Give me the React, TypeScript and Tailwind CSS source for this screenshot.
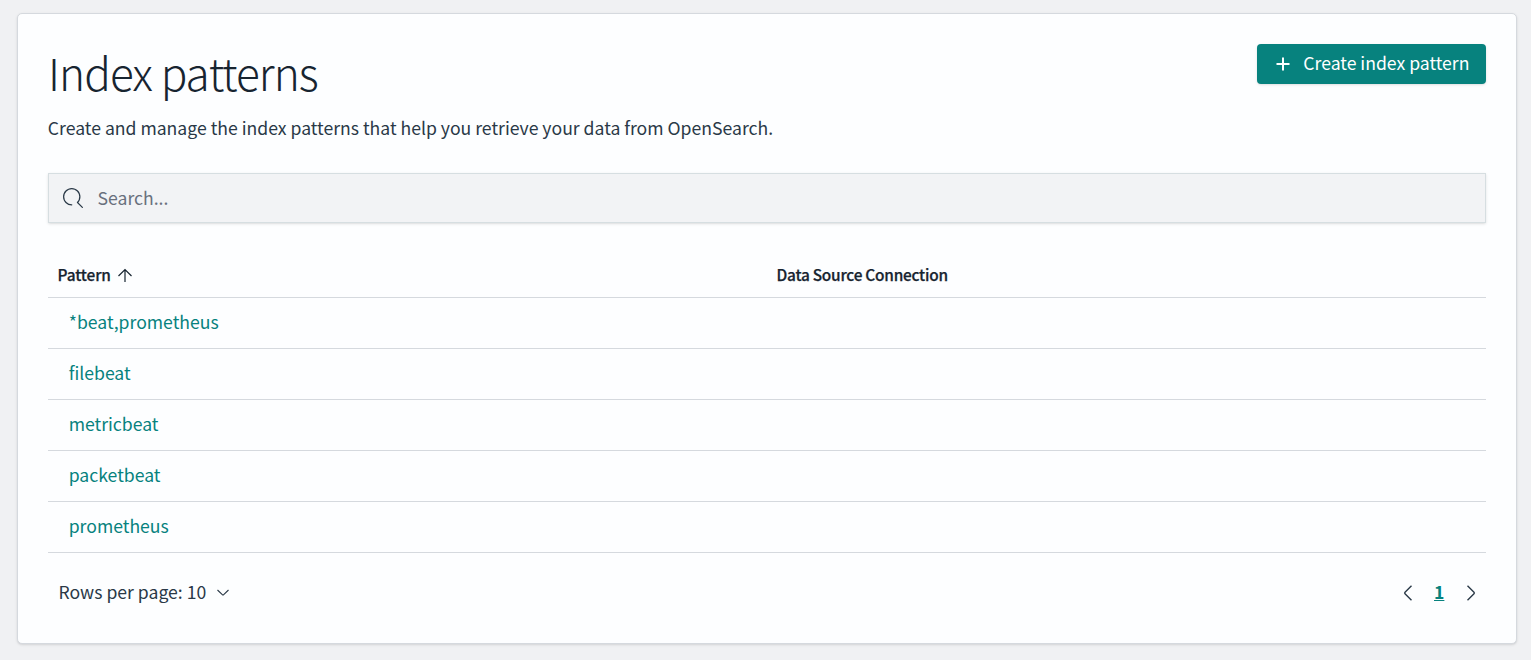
import React from "react";

const rows = ["*beat,prometheus", "filebeat", "metricbeat", "packetbeat", "prometheus"];

export default function App() {
  return (
    <div className="h-[660px] bg-[#f0f1f3] pt-[13px] pr-[14px] pl-[17px] font-['Noto_Sans_CJK_SC','Noto_Sans',sans-serif] text-[17.63px] text-[#2a3947]">
      <main className="h-[631px] rounded-[5px] border border-[#d5d9de] bg-[#fdfeff] px-[30px] pt-[30px] shadow-sm">
        <header className="flex h-[129px] items-start justify-between">
          <div>
            <h1 className="h-[63px] text-[44.1px] leading-[56px] font-light tracking-[-0.95px] whitespace-nowrap text-[#172430]">Index pa<span className="tracking-[-2.3px]">t</span>terns</h1>
            <p className="-ml-[0.2px] leading-[42px] whitespace-nowrap">Create and manage the index patterns that help you retrieve your data from OpenSearch.</p>
          </div>
          <button className="flex h-10 w-[229px] items-center rounded-[4px] bg-[#07827e] pl-[19px] text-white shadow-sm">
            <svg width="14" height="14" viewBox="0 0 14 14" stroke="currentColor" strokeWidth="2" fill="none"><path d="M7 .5v13M.5 7h13" /></svg>
            <span className="ml-[13.3px] pb-px whitespace-nowrap">Create index pattern</span>
          </button>
        </header>
        <div className="flex h-[50px] items-center border border-[#d6dee1] bg-[#f2f3f5] pl-[14px] shadow-sm">
          <svg width="20" height="20" viewBox="0 0 16 16" fill="#2a3947"><path d="M11.271 11.978l3.872 3.873a.502.502 0 00.708 0 .502.502 0 000-.708l-3.565-3.564c2.38-2.747 2.267-6.923-.342-9.532-2.73-2.73-7.17-2.73-9.898 0-2.728 2.729-2.728 7.17 0 9.9a6.955 6.955 0 004.949 2.05.5.5 0 000-1 5.96 5.96 0 01-4.242-1.757 6.01 6.01 0 010-8.486 6.004 6.004 0 018.484 0 6.01 6.01 0 010 8.486.5.5 0 00.034.738z" /></svg>
          <span className="ml-[14.5px] text-[#69707d]">Search...</span>
        </div>
        <div className="mt-[30px] flex h-[45px] items-center border-b border-[#d5d9de] text-[15.4px] font-medium tracking-[-0.23px] text-[#172430] [-webkit-text-stroke:0.25px_#172430]">
          <div className="flex w-[719px] items-center gap-[7.4px] pl-[9.5px]">
            <span className="tracking-[-0.1px]">Pattern</span>
            <svg width="14" height="14" viewBox="0 0 14 14" stroke="currentColor" strokeWidth="1.2" fill="none"><path d="M7 14V1.5M.5 8L7 1.5l6.5 6.5" /></svg>
          </div>
          <div className="pl-[9.5px]">Data Source Connection</div>
        </div>
        {rows.map((r) => (
          <div key={r} className="flex h-[51px] items-center border-b border-[#d5d9de] pb-px pl-[20.7px] text-[#07827e]">{r}</div>
        ))}
        <footer className="mt-5 flex h-10 items-center justify-between pr-[10px] pl-[10.5px]">
          <div className="flex items-center gap-[11px]">
            <span className="pb-px">Rows per page: 10</span>
            <svg className="mb-px" width="12" height="7" viewBox="0 0 12 7" stroke="currentColor" strokeWidth="1.1" fill="none"><path d="M.5 1l4.8 4.7a1 1 0 001.4 0L11.5 1" /></svg>
          </div>
          <div className="flex items-center">
            <svg width="10" height="16" viewBox="0 0 10 16" stroke="currentColor" strokeWidth="1.4" fill="none"><path d="M8.5 .8L2 7.3a1 1 0 000 1.4l6.5 6.5" /></svg>
            <span className="mr-[22px] ml-[21px] w-[10px] pb-px text-center font-bold text-[#07827e] underline">1</span>
            <svg width="10" height="16" viewBox="0 0 10 16" stroke="currentColor" strokeWidth="1.4" fill="none"><path d="M1.5 .8L8 7.3a1 1 0 010 1.4l-6.5 6.5" /></svg>
          </div>
        </footer>
      </main>
    </div>
  );
}
